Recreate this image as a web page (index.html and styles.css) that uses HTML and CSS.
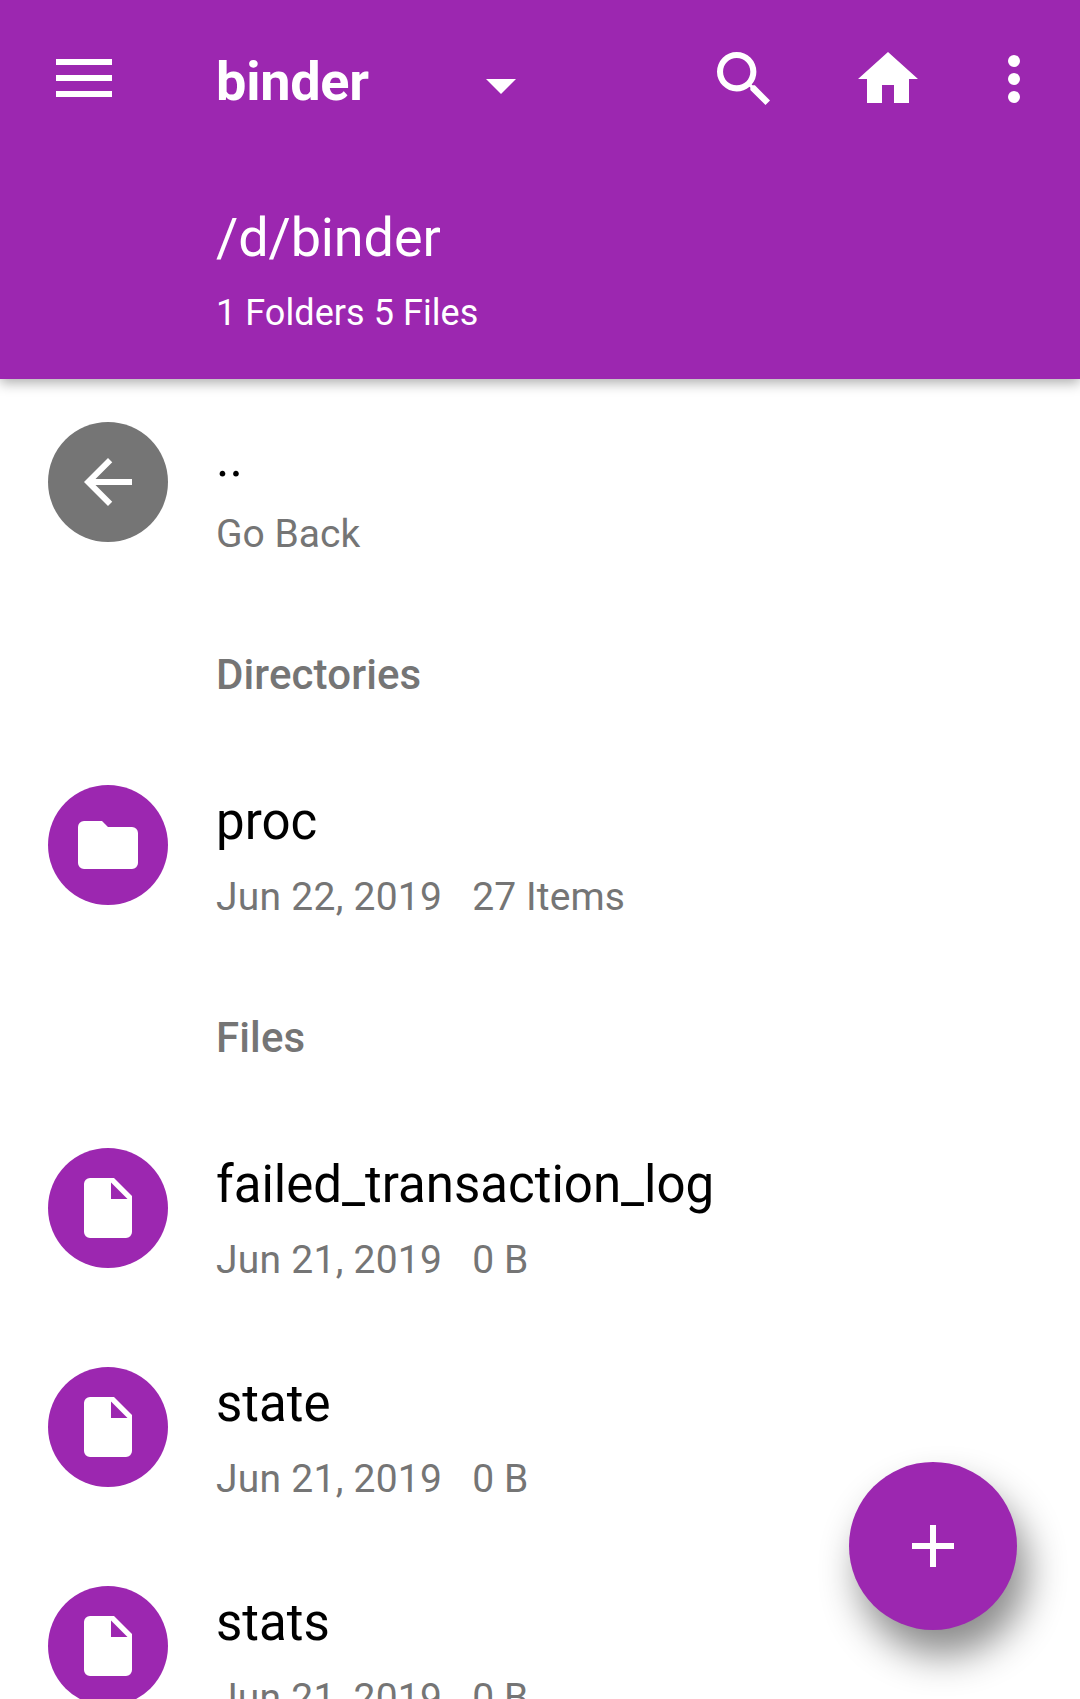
FILE: index.html
```html
<!DOCTYPE html>
<html lang="en">
<head>
<meta charset="utf-8">
<title>binder</title>
<link rel="stylesheet" href="styles.css">
</head>
<body>
<svg class="defs" width="0" height="0">
  <symbol id="file" viewBox="0 0 60 60"><path d="M12 0H36L54 18V54a6 6 0 0 1-6 6H12a6 6 0 0 1-6-6V6a6 6 0 0 1 6-6ZM33 4.500V21H49.500Z" fill-rule="evenodd"/></symbol>
</svg>
<header class="appbar">
  <div class="toolbar">
    <svg class="menu" viewBox="0 0 56 38"><path d="M0 0h56v6H0zM0 16h56v6H0zM0 32h56v6H0z"/></svg>
    <h1 class="title">binder</h1>
    <svg class="caret" viewBox="0 0 30 15"><path d="M0 0h30L15 15z"/></svg>
    <svg class="search" viewBox="3 3 17.490 17.490"><path d="M15.500 14h-.79l-.28-.27A6.471 6.471 0 0 0 16 9.500 6.500 6.500 0 1 0 9.500 16c1.610 0 3.090-.59 4.230-1.570l.27.28v.79l5 4.990L20.490 19l-4.990-5zm-6 0C7.010 14 5 11.990 5 9.500S7.010 5 9.500 5 14 7.010 14 9.500 11.990 14 9.500 14z"/></svg>
    <svg class="home" viewBox="2 3 20 17"><path d="M10 20v-6h4v6h5v-8h3L12 3 2 12h3v8z"/></svg>
    <svg class="more" viewBox="0 0 12 48"><circle cx="6" cy="6" r="6"/><circle cx="6" cy="24" r="6"/><circle cx="6" cy="42" r="6"/></svg>
  </div>
  <div class="path">/d/binder</div>
  <div class="counts">1 Folders 5 Files</div>
</header>
<main class="list">
  <div class="row">
    <span class="badge back"><svg viewBox="4 4 16 16" class="arrow"><path d="M20 11H7.830l5.590-5.590L12 4l-8 8 8 8 1.410-1.410L7.830 13H20v-2z"/></svg></span>
    <div class="text"><div class="name">..</div><div class="meta">Go Back</div></div>
  </div>
  <h2 class="section">Directories</h2>
  <div class="row">
    <span class="badge"><svg viewBox="0 0 60 60" class="glyph"><path d="M6 6H24L30 12H54a6 6 0 0 1 6 6V48a6 6 0 0 1-6 6H6a6 6 0 0 1-6-6V12a6 6 0 0 1 6-6Z"/></svg></span>
    <div class="text"><div class="name">proc</div><div class="meta"><span class="date">Jun 22, 2019</span><span class="size">27 Items</span></div></div>
  </div>
  <h2 class="section">Files</h2>
  <div class="row">
    <span class="badge"><svg class="glyph"><use href="#file"/></svg></span>
    <div class="text"><div class="name">failed_transaction_log</div><div class="meta"><span class="date">Jun 21, 2019</span><span class="size">0 B</span></div></div>
  </div>
  <div class="row">
    <span class="badge"><svg class="glyph"><use href="#file"/></svg></span>
    <div class="text"><div class="name">state</div><div class="meta"><span class="date">Jun 21, 2019</span><span class="size">0 B</span></div></div>
  </div>
  <div class="row">
    <span class="badge"><svg class="glyph"><use href="#file"/></svg></span>
    <div class="text"><div class="name">stats</div><div class="meta"><span class="date">Jun 21, 2019</span><span class="size">0 B</span></div></div>
  </div>
</main>
<button class="fab" aria-label="Add"><svg viewBox="0 0 42 42"><path d="M18 0h6v18h18v6H24v18h-6V24H0v-6h18z"/></svg></button>
</body>
</html>
```
FILE: styles.css
```css
* { box-sizing: border-box; }
body {
  margin: 0;
  height: 1699px;
  overflow: hidden;
  position: relative;
  background: #fff;
  font-family: Roboto, sans-serif;
  color: #000;
}
svg { display: block; fill: #fff; flex: none; }
.defs { position: absolute; }
.appbar {
  position: relative;
  height: 379px;
  background: #9c27b0;
  color: #fff;
  box-shadow: 0 4px 12px rgba(0, 0, 0, .32);
}
.toolbar { display: flex; align-items: center; height: 156px; padding-left: 56px; }
.menu { width: 56px; height: 38px; }
.title { width: 270px; margin: 8px 0 0 104px; font-size: 54px; line-height: 64px; font-weight: 700; letter-spacing: -.25px; }
.caret { width: 30px; height: 15px; margin-top: 17px; }
.search { width: 53px; height: 53px; margin: 1px 0 0 201px; }
.home { width: 60px; height: 51px; margin: -1px 0 0 88px; }
.more { width: 12px; height: 48px; margin: 2px 0 0 90px; }
.path { margin: 50px 0 0 216px; font-size: 54px; line-height: 64px; letter-spacing: -.12px; }
.counts { margin: 22px 0 0 216px; font-size: 36px; line-height: 42px; letter-spacing: .06px; }
.row { display: flex; height: 219px; padding: 43px 48px 0; }
.badge {
  display: flex;
  align-items: center;
  justify-content: center;
  flex: none;
  width: 120px;
  height: 120px;
  border-radius: 50%;
  background: #9c27b0;
}
.back { background: #757575; }
.arrow { width: 48px; height: 48px; }
.glyph { width: 60px; height: 60px; }
.text { margin-left: 48px; padding-top: 7px; }
.name { font-size: 51px; line-height: 60px; }
.meta { display: flex; gap: 30px; margin-top: 22px; font-size: 39px; line-height: 46px; color: #757575; }
.date { letter-spacing: .26px; }
.size { letter-spacing: .12px; }
.section { height: 144px; margin: 0; padding: 53px 0 0 216px; font-size: 42px; line-height: 48px; font-weight: 500; letter-spacing: .12px; color: #757575; }
.fab {
  position: absolute;
  left: 849px;
  top: 1462px;
  display: flex;
  align-items: center;
  justify-content: center;
  width: 168px;
  height: 168px;
  padding: 0;
  border: 0;
  border-radius: 50%;
  background: #9c27b0;
  box-shadow: 10px 25px 38px rgba(0, 0, 0, .46);
}
.fab svg { width: 42px; height: 42px; }
```
